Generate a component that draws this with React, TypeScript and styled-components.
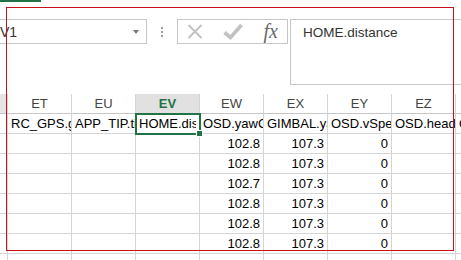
import React from 'react';
import styled, { createGlobalStyle } from 'styled-components';

const GlobalStyle = createGlobalStyle`
    html, body {
        margin: 0;
        padding: 0;
        background: #ffffff;
    }
    body {
        width: 461px;
        height: 260px;
        overflow: hidden;
        font-family: "Liberation Sans", Arial, sans-serif;
    }
`;

const Page = styled.div `
    position: relative;
    width: 461px;
    height: 260px;
    overflow: hidden;
    background: #ffffff;
`;

const TopArea = styled.div `
    height: 94px;
    display: flex;
    flex-direction: column;
`;

const TabStrip = styled.div `
    height: 2px;
    width: 41px;
    background: #217346;
`;

const ControlsRow = styled.div `
    margin-top: 17px;
    display: flex;
    align-items: flex-start;
`;

const NameBox = styled.div `
    box-sizing: border-box;
    width: 147px;
    height: 25px;
    border: 1px solid #c6c6c6;
    border-left: none;
    display: flex;
    align-items: center;
    justify-content: space-between;
    padding-right: 7px;
    font-size: 14px;
    color: #333333;
`;

const DropArrow = styled.span `
    width: 0;
    height: 0;
    border-left: 3px solid transparent;
    border-right: 3px solid transparent;
    border-top: 4px solid #7a7a7a;
`;

const Grip = styled.div `
    width: 30px;
    height: 25px;
    display: flex;
    flex-direction: column;
    align-items: center;
    justify-content: center;
    gap: 2px;
`;

const GripDot = styled.span `
    width: 2px;
    height: 2px;
    background: #9a9a9a;
`;

const FxButtons = styled.div `
    box-sizing: border-box;
    width: 111px;
    height: 25px;
    border: 1px solid #c6c6c6;
    display: flex;
    align-items: center;
    justify-content: space-between;
    padding: 0 9px 0 9px;
`;

const FxLabel = styled.span `
    font-family: "Liberation Serif", "Times New Roman", serif;
    font-style: italic;
    font-size: 20px;
    color: #6a6a6a;
    line-height: 20px;
    margin-bottom: 2px;
`;

const FormulaInput = styled.div `
    box-sizing: border-box;
    flex: 1;
    margin-left: 2px;
    height: 66px;
    border: 1px solid #c6c6c6;
    border-right: none;
    padding: 5px 0 0 12px;
    font-size: 13.5px;
    color: #333333;
`;

const Sheet = styled.div `
    display: flex;
    flex-direction: column;
`;

const Row = styled.div `
    display: grid;
    grid-template-columns: 8px repeat(8, 64px);
`;

const Cell = styled.div<{ $align?: 'left' | 'right' }> `
    box-sizing: border-box;
    height: 20px;
    border-right: 1px solid #d4d4d4;
    border-bottom: 1px solid #d4d4d4;
    padding: 0 3px;
    line-height: 20px;
    font-size: 13px;
    white-space: nowrap;
    overflow: hidden;
    color: #000000;
    text-align: ${p => p.$align === 'right' ? 'right' : 'left'};
`;

const HeaderCell = styled(Cell)<{ $selected?: boolean }> `
    text-align: center;
    color: ${p => p.$selected ? '#217346' : '#444444'};
    font-weight: ${p => p.$selected ? 'bold' : 'normal'};
    background: ${p => p.$selected ? '#e1e1e1' : '#ffffff'};
    border-bottom-color: ${p => p.$selected ? '#217346' : '#c6c6c6'};
`;

const CornerCell = styled(Cell) `
    background: #e4e4e4;
    border-bottom-color: #c6c6c6;
`;

const RowHead = styled(Cell) `
    background: #ffffff;
`;

const ActiveCell = styled(Cell) `
    position: relative;
    overflow: visible;
    outline: 2px solid #217346;
    outline-offset: -1px;
    z-index: 1;
`;

const Clip = styled.span `
    display: block;
    overflow: hidden;
`;

const FillHandle = styled.span `
    position: absolute;
    right: -4px;
    bottom: -4px;
    width: 5px;
    height: 5px;
    background: #217346;
    border: 1px solid #ffffff;
`;

const Annotation = styled.div `
    position: absolute;
    left: 6px;
    top: 7px;
    width: 448px;
    height: 244px;
    box-sizing: border-box;
    border: 1px solid #c8101a;
    pointer-events: none;
    z-index: 5;
`;

const columns = ['ET', 'EU', 'EV', 'EW', 'EX', 'EY', 'EZ', 'FA'];
const selectedCol = 'EV';

const fieldNames = ['RC_GPS.gpsTime', 'APP_TIP.tip', 'HOME.distance', 'OSD.yawCalc', 'GIMBAL.yaw', 'OSD.vSpeed', 'OSD.heading', 'OSD.xSpeed'];

const yawValues = ['102.8', '102.8', '102.7', '102.8', '102.8', '102.8', ''];

function CancelIcon() {
    return (
        <svg width="16" height="15" viewBox="0 0 16 15">
            <path d="M1.5 1 L14.5 14 M14.5 1 L1.5 14" stroke="#c2c2c2" strokeWidth="2" fill="none" />
        </svg>
    );
}

function EnterIcon() {
    return (
        <svg width="20" height="17" viewBox="0 0 20 17">
            <path d="M1.5 9.5 L7.5 14.5 L18.5 2" stroke="#c2c2c2" strokeWidth="3.6" fill="none" strokeLinejoin="miter" />
        </svg>
    );
}

export default function App() {
    return (
        <Page>
            <GlobalStyle />
            <TopArea>
                <TabStrip />
                <ControlsRow>
                    <NameBox>
                        <span>V1</span>
                        <DropArrow />
                    </NameBox>
                    <Grip>
                        <GripDot />
                        <GripDot />
                        <GripDot />
                    </Grip>
                    <FxButtons>
                        <CancelIcon />
                        <EnterIcon />
                        <FxLabel>fx</FxLabel>
                    </FxButtons>
                    <FormulaInput>HOME.distance</FormulaInput>
                </ControlsRow>
            </TopArea>
            <Sheet>
                <Row>
                    <CornerCell />
                    {
                        columns.map(col => (
                            <HeaderCell key={col} $selected={col === selectedCol}>{col}</HeaderCell>
                        ))
                    }
                </Row>
                <Row>
                    <RowHead />
                    {
                        fieldNames.map((name, index) => {
                            if (columns[index] === selectedCol) {
                                return (
                                    <ActiveCell key={name}>
                                        <Clip>{name}</Clip>
                                        <FillHandle />
                                    </ActiveCell>
                                );
                            }
                            return <Cell key={name}>{name}</Cell>;
                        })
                    }
                </Row>
                {
                    yawValues.map((yaw, rowIndex) => (
                        <Row key={rowIndex}>
                            <RowHead />
                            <Cell />
                            <Cell />
                            <Cell />
                            <Cell $align="right">{yaw}</Cell>
                            <Cell $align="right">{yaw ? '107.3' : ''}</Cell>
                            <Cell $align="right">{yaw ? '0' : ''}</Cell>
                            <Cell />
                            <Cell />
                        </Row>
                    ))
                }
            </Sheet>
            <Annotation />
        </Page>
    );
}
